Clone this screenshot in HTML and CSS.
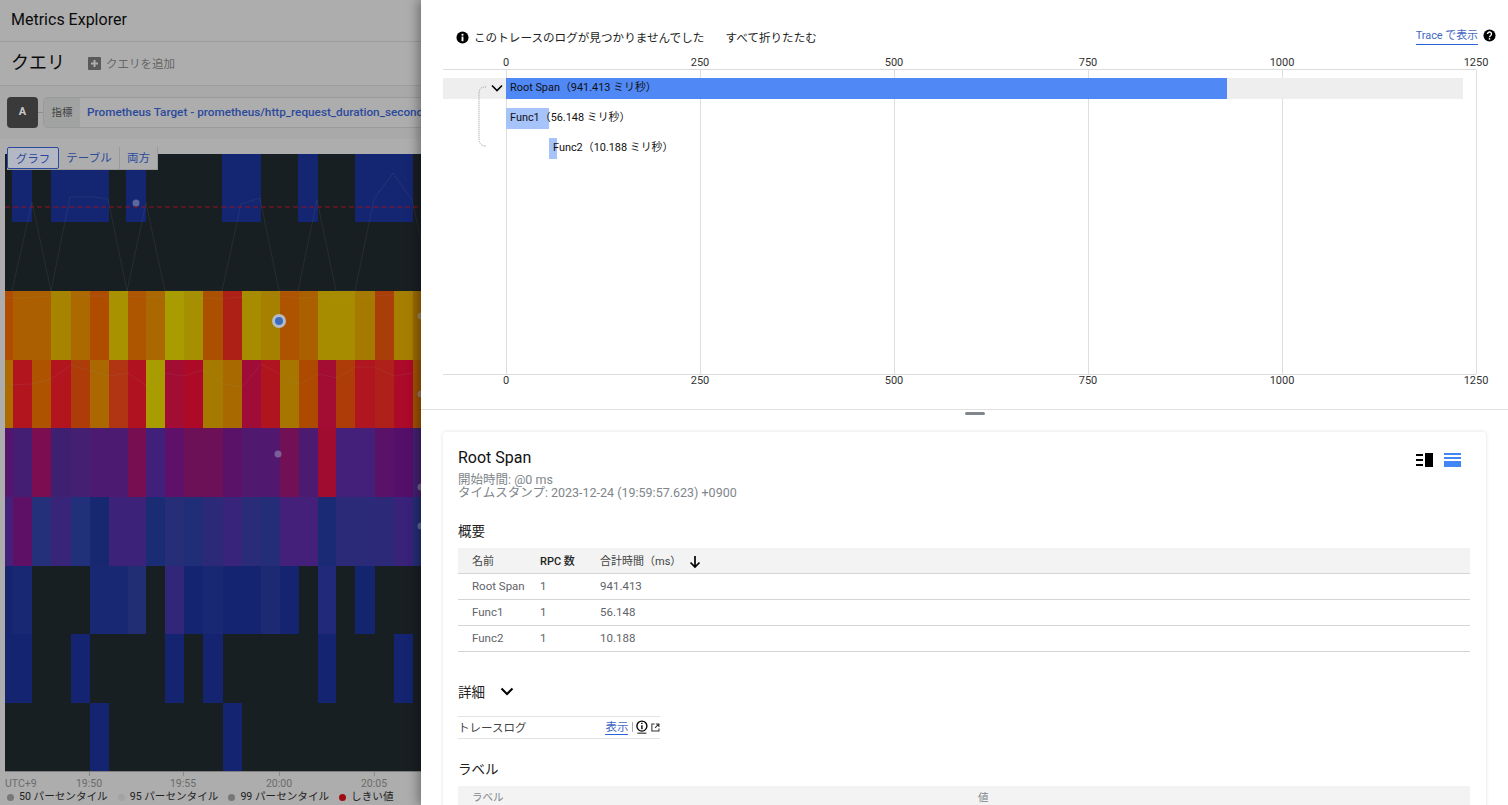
FILE: index.html
```html
<!DOCTYPE html>
<html lang="ja">
<head>
<meta charset="utf-8">
<title>Metrics Explorer</title>
<link rel="stylesheet" href="styles.css">
</head>
<body>
<div class="app">
  <section class="left">
    <header class="page-head">Metrics Explorer</header>
    <div class="query-head">
      <h2 class="query-title">クエリ</h2>
      <svg class="add-icon" viewBox="0 0 13 13"><rect width="13" height="13" rx="1" fill="#5a5a5a"/><path d="M6.5 3v7M3 6.5h7" stroke="#adadad" stroke-width="2"/></svg>
      <span class="add-text">クエリを追加</span>
    </div>
    <div class="query-row">
      <div class="chip">A</div>
      <div class="chip-link"></div>
      <div class="field">
        <span class="field-label">指標</span>
        <span class="field-value">Prometheus Target - prometheus/http_request_duration_seconds/histogram</span>
      </div>
    </div>
    <div class="chart-area">
      <div class="tabs">
        <span class="tab tab-on">グラフ</span>
        <span class="tab">テーブル</span>
        <span class="tab">両方</span>
      </div>
      <svg class="heatmap" width="416" height="617" viewBox="5 154 416 617">
        <rect x="5" y="154" width="416" height="617" fill="#181f23"/>
        <g fill="#142672">
          <rect x="12" y="154" width="20" height="68"/><rect x="51" y="154" width="58" height="68"/><rect x="126" y="154" width="20" height="68"/><rect x="222" y="154" width="39" height="68"/><rect x="298" y="154" width="20" height="68"/><rect x="355" y="154" width="58" height="68"/>
        </g>
        <g>
          <rect x="5" y="291" width="8" height="69" fill="#b04d02"/><rect x="13" y="291" width="19" height="69" fill="#ac5f00"/><rect x="32" y="291" width="19" height="69" fill="#ac5f00"/><rect x="51" y="291" width="20" height="69" fill="#a68400"/><rect x="71" y="291" width="19" height="69" fill="#ab6900"/><rect x="90" y="291" width="19" height="69" fill="#af4c00"/><rect x="109" y="291" width="19" height="69" fill="#a89200"/><rect x="128" y="291" width="18" height="69" fill="#ae5500"/><rect x="146" y="291" width="19" height="69" fill="#ab6800"/><rect x="165" y="291" width="19" height="69" fill="#a89c00"/><rect x="184" y="291" width="19" height="69" fill="#a68f00"/><rect x="203" y="291" width="20" height="69" fill="#ab5000"/><rect x="223" y="291" width="19" height="69" fill="#ad2015"/><rect x="242" y="291" width="19" height="69" fill="#a88c00"/><rect x="261" y="291" width="19" height="69" fill="#a68000"/><rect x="280" y="291" width="19" height="69" fill="#ae5400"/><rect x="299" y="291" width="19" height="69" fill="#ab6000"/><rect x="318" y="291" width="18" height="69" fill="#a88c00"/><rect x="336" y="291" width="19" height="69" fill="#a88c00"/><rect x="355" y="291" width="20" height="69" fill="#a67a00"/><rect x="375" y="291" width="19" height="69" fill="#aa3e08"/><rect x="394" y="291" width="19" height="69" fill="#a67f00"/><rect x="413" y="291" width="8" height="69" fill="#9c6a00"/>
        </g>
        <g>
          <rect x="5" y="360" width="8" height="68" fill="#ac6c00"/><rect x="13" y="360" width="19" height="68" fill="#b3151f"/><rect x="32" y="360" width="19" height="68" fill="#ae5400"/><rect x="51" y="360" width="20" height="68" fill="#b3151f"/><rect x="71" y="360" width="19" height="68" fill="#ad3c08"/><rect x="90" y="360" width="19" height="68" fill="#ab6800"/><rect x="109" y="360" width="19" height="68" fill="#b13512"/><rect x="128" y="360" width="18" height="68" fill="#b0131f"/><rect x="146" y="360" width="19" height="68" fill="#a89c00"/><rect x="165" y="360" width="19" height="68" fill="#a30c33"/><rect x="184" y="360" width="19" height="68" fill="#ad0a27"/><rect x="203" y="360" width="20" height="68" fill="#a67a00"/><rect x="223" y="360" width="19" height="68" fill="#a86a00"/><rect x="242" y="360" width="19" height="68" fill="#a00c38"/><rect x="261" y="360" width="19" height="68" fill="#b0141f"/><rect x="280" y="360" width="19" height="68" fill="#a67600"/><rect x="299" y="360" width="19" height="68" fill="#ad4a00"/><rect x="318" y="360" width="18" height="68" fill="#a30c33"/><rect x="336" y="360" width="19" height="68" fill="#ad3c08"/><rect x="355" y="360" width="20" height="68" fill="#b0161f"/><rect x="375" y="360" width="19" height="68" fill="#b0201a"/><rect x="394" y="360" width="19" height="68" fill="#ab0a28"/><rect x="413" y="360" width="8" height="68" fill="#a05000"/>
        </g>
        <g>
          <rect x="5" y="428" width="8" height="69" fill="#55146e"/><rect x="13" y="428" width="19" height="69" fill="#441e72"/><rect x="32" y="428" width="19" height="69" fill="#7b0d50"/><rect x="51" y="428" width="20" height="69" fill="#3f2070"/><rect x="71" y="428" width="19" height="69" fill="#442072"/><rect x="90" y="428" width="19" height="69" fill="#4c1a70"/><rect x="109" y="428" width="19" height="69" fill="#4c1a70"/><rect x="128" y="428" width="18" height="69" fill="#780e52"/><rect x="146" y="428" width="19" height="69" fill="#40207a"/><rect x="165" y="428" width="19" height="69" fill="#5f1068"/><rect x="184" y="428" width="19" height="69" fill="#6c1058"/><rect x="203" y="428" width="20" height="69" fill="#6c1058"/><rect x="223" y="428" width="19" height="69" fill="#5a1268"/><rect x="242" y="428" width="19" height="69" fill="#50186e"/><rect x="261" y="428" width="19" height="69" fill="#50186e"/><rect x="280" y="428" width="19" height="69" fill="#721056"/><rect x="299" y="428" width="19" height="69" fill="#4c1a70"/><rect x="318" y="428" width="18" height="69" fill="#a00c30"/><rect x="336" y="428" width="19" height="69" fill="#44207a"/><rect x="355" y="428" width="20" height="69" fill="#44207a"/><rect x="375" y="428" width="19" height="69" fill="#5a1268"/><rect x="394" y="428" width="19" height="69" fill="#540f6a"/><rect x="413" y="428" width="8" height="69" fill="#452070"/>
        </g>
        <g>
          <rect x="5" y="497" width="8" height="69" fill="#44207a"/><rect x="13" y="497" width="19" height="69" fill="#5e0f66"/><rect x="32" y="497" width="19" height="69" fill="#25307a"/><rect x="51" y="497" width="20" height="69" fill="#38257a"/><rect x="71" y="497" width="19" height="69" fill="#20307a"/><rect x="90" y="497" width="19" height="69" fill="#182870"/><rect x="109" y="497" width="19" height="69" fill="#3c2278"/><rect x="128" y="497" width="18" height="69" fill="#3c2278"/><rect x="146" y="497" width="19" height="69" fill="#1a2c74"/><rect x="165" y="497" width="19" height="69" fill="#262e78"/><rect x="184" y="497" width="19" height="69" fill="#202e78"/><rect x="203" y="497" width="20" height="69" fill="#2c2a78"/><rect x="223" y="497" width="19" height="69" fill="#38247a"/><rect x="242" y="497" width="19" height="69" fill="#2a2c78"/><rect x="261" y="497" width="19" height="69" fill="#242e78"/><rect x="280" y="497" width="19" height="69" fill="#44207a"/><rect x="299" y="497" width="19" height="69" fill="#44207a"/><rect x="318" y="497" width="18" height="69" fill="#1a2a74"/><rect x="336" y="497" width="19" height="69" fill="#2a2a78"/><rect x="355" y="497" width="20" height="69" fill="#2a2a78"/><rect x="375" y="497" width="19" height="69" fill="#2c2a78"/><rect x="394" y="497" width="19" height="69" fill="#38227a"/><rect x="413" y="497" width="8" height="69" fill="#242e78"/>
        </g>
        <g>
          <rect x="5" y="566" width="8" height="68" fill="#182470"/><rect x="13" y="566" width="19" height="68" fill="#182872"/><rect x="90" y="566" width="19" height="68" fill="#182872"/><rect x="109" y="566" width="19" height="68" fill="#182872"/><rect x="128" y="566" width="18" height="68" fill="#222e74"/><rect x="165" y="566" width="19" height="68" fill="#32267a"/><rect x="184" y="566" width="19" height="68" fill="#142470"/><rect x="203" y="566" width="20" height="68" fill="#182872"/><rect x="223" y="566" width="38" height="68" fill="#142470"/><rect x="261" y="566" width="19" height="68" fill="#1c2a74"/><rect x="280" y="566" width="19" height="68" fill="#142470"/><rect x="318" y="566" width="18" height="68" fill="#20297a"/><rect x="355" y="566" width="20" height="68" fill="#142570"/>
        </g>
        <g fill="#142470">
          <rect x="5" y="634" width="27" height="69"/><rect x="71" y="634" width="19" height="69"/><rect x="165" y="634" width="19" height="69"/><rect x="203" y="634" width="20" height="69"/><rect x="318" y="634" width="18" height="69"/><rect x="394" y="634" width="19" height="69"/>
          <rect x="90" y="703" width="19" height="68"/><rect x="223" y="703" width="19" height="68"/>
        </g>
        <g class="series">
          <polyline points="12,291 32,202 51,291 70,197 95,197 108,199 127,291 146,203 165,291 222,291 241,204 260,198 279,291 298,291 317,200 336,291 355,291 374,199 393,173 412,200 421,240"/>
          <polyline points="5,297 20,298 51,296 109,296 146,297 184,297 223,299 261,294 299,298 336,296 375,296 421,293"/>
          <polyline points="5,385 32,384 51,379 71,365 109,376 128,373 147,386 165,373 184,376 203,370 223,384 242,387 261,364 299,384 318,374 337,378 355,367 375,367 394,376 413,373 421,372"/>
        </g>
        <line class="threshold" x1="5" y1="207" x2="421" y2="207"/>
        <g>
          <circle class="dot" cx="136" cy="203" r="3.5"/>
          <circle class="dot" cx="278" cy="454" r="3.5"/>
          <circle class="dot" cx="421" cy="316" r="3.5"/>
          <circle class="dot" cx="421" cy="394" r="3.5"/>
          <circle class="dot" cx="421" cy="487" r="3.5"/>
          <circle class="dot" cx="421" cy="526" r="3.5"/>
          <circle class="dot-ring" cx="279" cy="321" r="7"/>
          <circle class="dot-core" cx="279" cy="321" r="4"/>
        </g>
      </svg>
      <div class="time-axis">
        <span class="tz">UTC+9</span>
        <span class="tick tick-1">19:50</span>
        <span class="tick tick-2">19:55</span>
        <span class="tick tick-3">20:00</span>
        <span class="tick tick-4">20:05</span>
      </div>
      <div class="legend">
        <span class="legend-item"><i class="swatch swatch-50"></i>50 パーセンタイル</span>
        <span class="legend-item"><i class="swatch swatch-95"></i>95 パーセンタイル</span>
        <span class="legend-item"><i class="swatch swatch-50"></i>99 パーセンタイル</span>
        <span class="legend-item"><i class="swatch swatch-red"></i>しきい値</span>
      </div>
    </div>
  </section>

  <section class="drawer">
    <div class="trace-top">
      <div class="notice-row">
        <svg class="info-solid" viewBox="0 0 14 14"><circle cx="7" cy="7" r="6.5" fill="#000"/><rect x="6" y="6" width="2" height="5" fill="#fff"/><rect x="6" y="3" width="2" height="2" fill="#fff"/></svg>
        <span class="notice">このトレースのログが見つかりませんでした</span>
        <span class="collapse-all">すべて折りたたむ</span>
        <span class="spacer"></span>
        <a class="trace-link">Trace で表示</a>
        <svg class="help" viewBox="0 0 14 14"><circle cx="7" cy="7" r="6.5" fill="#000"/><path d="M4.9 5.4a2.1 2.1 0 1 1 3.4 1.6c-.8.6-1.3 1-1.3 2" fill="none" stroke="#fff" stroke-width="1.5"/><rect x="6.2" y="9.8" width="1.6" height="1.6" fill="#fff"/></svg>
      </div>
      <div class="timeline">
        <div class="scale scale-top"><span>0</span><span>250</span><span>500</span><span>750</span><span>1000</span><span>1250</span></div>
        <div class="plot">
          <div class="grid-lines"><i></i><i></i><i></i><i></i><i></i><i></i></div>
          <div class="span-row span-root">
            <svg class="span-chevron" viewBox="0 0 12 8"><path d="M1 1.5l5 5 5-5" fill="none" stroke="#000" stroke-width="1.6"/></svg>
            <div class="root-bar"><span class="span-label">Root Span（941.413 ミリ秒）</span></div>
          </div>
          <div class="span-row">
            <div class="bar bar-func1"></div>
            <span class="span-label span-label-1">Func1（56.148 ミリ秒）</span>
          </div>
          <div class="span-row">
            <div class="bar bar-func2"></div>
            <span class="span-label span-label-2">Func2（10.188 ミリ秒）</span>
          </div>
          <svg class="tree-line" width="30" height="64" viewBox="0 0 30 64"><path d="M9 1H8Q2 1 2 8V53Q2 60 9 60" fill="none" stroke="#9a9a9a" stroke-dasharray="1 1"/></svg>
        </div>
        <div class="scale scale-bottom"><span>0</span><span>250</span><span>500</span><span>750</span><span>1000</span><span>1250</span></div>
      </div>
    </div>
    <div class="handle-bar"><i class="handle"></i></div>
    <article class="card">
      <div class="card-head">
        <div>
          <h3 class="span-title">Root Span</h3>
          <p class="span-meta">開始時間: @0 ms<br>タイムスタンプ: 2023-12-24 (19:59:57.623) +0900</p>
        </div>
        <div class="view-icons">
          <svg class="view-icon" viewBox="0 0 17 14"><path d="M0 1h7v2H0zM0 6h7v2H0zM0 11h7v2H0z" fill="#000"/><rect x="9" y="0" width="8" height="14" fill="#000"/></svg>
          <svg class="view-icon" viewBox="0 0 17 14"><path d="M0 0h17v2H0zM0 4h17v2H0z" fill="#4285f4"/><rect y="8" width="17" height="6" fill="#4285f4"/></svg>
        </div>
      </div>
      <h4 class="section-title section-summary">概要</h4>
      <table class="stats">
        <thead>
          <tr><th class="col-name">名前</th><th class="col-rpc">RPC 数</th><th class="col-total">合計時間（ms）<svg class="sort" viewBox="0 0 12 14"><path d="M6 1v11M1.5 7.5L6 12l4.500-4.500" fill="none" stroke="#000" stroke-width="1.700"/></svg></th></tr>
        </thead>
        <tbody>
          <tr><td>Root Span</td><td>1</td><td>941.413</td></tr>
          <tr><td>Func1</td><td>1</td><td>56.148</td></tr>
          <tr><td>Func2</td><td>1</td><td>10.188</td></tr>
        </tbody>
      </table>
      <div class="details-head">
        <h4 class="section-title">詳細</h4>
        <svg class="details-chevron" viewBox="0 0 14 9"><path d="M1.500 1.500L7 7l5.500-5.500" fill="none" stroke="#000" stroke-width="2"/></svg>
      </div>
      <div class="log-row">
        <span class="log-name">トレースログ</span>
        <a class="log-link">表示</a>
        <span class="log-sep"></span>
        <svg class="log-info" viewBox="0 0 13 15"><circle cx="6.500" cy="6.500" r="5.500" fill="none" stroke="#000" stroke-width="1.500"/><path d="M6.500 5.500v4.500M6.500 2.800v1.500" stroke="#000" stroke-width="1.500"/><path d="M1.500 14.300h10" stroke="#000"/></svg>
        <svg class="log-open" viewBox="0 0 10 10"><path d="M4 1H1v8h8V6M5.500 1H9v3.500M9 1L4.500 5.500" fill="none" stroke="#333" stroke-width="1.200"/></svg>
      </div>
      <h4 class="section-title section-labels">ラベル</h4>
      <div class="labels-head"><span class="labels-key">ラベル</span><span>値</span></div>
    </article>
  </section>
</div>
</body>
</html>
```
FILE: styles.css
```css
* { box-sizing: border-box; }
html, body { margin: 0; height: 100%; overflow: hidden; }
body { font-family: Roboto, "Noto Sans CJK JP", sans-serif; background: #fff; color: #000; }
h2, h3, h4, p { margin: 0; font-weight: 400; }
.app { display: flex; width: 1508px; height: 805px; overflow: hidden; }

/* left dimmed page */
.left { width: 421px; flex: none; height: 805px; background: #adadad; overflow: hidden; display: flex; flex-direction: column; }
.page-head { height: 42px; padding: 11px 11px 0; font-size: 16px; line-height: 18px; color: #0b0b0b; border-bottom: 1px solid #9c9c9c; flex: none; }
.query-head { height: 44px; padding: 0 11px; display: flex; align-items: center; border-bottom: 1px solid #9c9c9c; flex: none; }
.query-title { font-size: 18px; color: #0b0b0b; width: 77px; margin-top: -6px; }
.add-icon { width: 13px; height: 13px; margin-right: 5px; flex: none; }
.add-text { font-size: 11.500px; color: #676767; margin-bottom: 2px; }
.query-row { height: 53px; padding: 11px 0 0 7px; display: flex; align-items: flex-start; background: #a9a9a9; flex: none; }
.chip { width: 31px; height: 31px; border-radius: 4px; background: #3a3a3a; color: #c8c8c8; font-size: 11px; font-weight: 700; display: flex; align-items: center; justify-content: center; padding-bottom: 3px; flex: none; }
.chip-link { width: 5px; height: 1px; background: #8c8c8c; margin-top: 15px; flex: none; }
.field { height: 31px; flex: none; width: 420px; display: flex; border: 1px solid #9a9a9a; border-radius: 4px 0 0 4px; background: #adadad; white-space: nowrap; }
.field-label { width: 36px; background: #a1a3a3; color: #444; font-size: 10.500px; display: flex; align-items: center; justify-content: center; padding-bottom: 3px; flex: none; }
.field-value { margin-left: 7px; font-size: 11.750px; font-weight: 500; color: #2b4a9d; line-height: 28px; }
.chart-area { position: relative; padding: 15px 0 0 5px; flex: 1; }
.tabs { position: absolute; left: 7px; top: 8px; display: flex; height: 23px; background: #adadad; border: 1px solid #9a9a9a; border-left: 0; border-top: 0; font-size: 11.500px; color: #2b4a9d; z-index: 1; }
.tab { padding: 2px 0 0; text-align: center; border-right: 1px solid #9a9a9a; width: 61px; }
.tab:last-child { width: 37px; border-right: 0; }
.tab-on { width: 52px; background: #b4b8c4; border: 1px solid #2b4a9d; border-radius: 2px; }
.heatmap { display: block; }
.series polyline { fill: none; stroke: rgba(150, 150, 150, .12); stroke-width: 1; }
.threshold { stroke: #96101e; stroke-width: 1; stroke-dasharray: 5 3; }
.dot { fill: rgba(160, 170, 200, .5); }
.dot-ring { fill: #b5bcc8; }
.dot-core { fill: #3e6dbd; }
.time-axis { position: relative; height: 18px; border-top: 1px solid #7f7f7f; font-size: 10.500px; color: #6b6b6b; line-height: 12px; width: 416px; }
.tz { position: absolute; left: 0; top: 6px; }
.tick { position: absolute; top: 6px; transform: translateX(-50%); }
.tick::before { content: ""; position: absolute; left: 50%; top: -6px; height: 4px; width: 1px; background: #8a8a8a; }
.tick-1 { left: 84px; }
.tick-2 { left: 178px; }
.tick-3 { left: 274px; }
.tick-4 { left: 369px; }
.legend { display: flex; font-size: 10.600px; line-height: 14px; color: #222; white-space: nowrap; margin-top: 1px; padding-left: 2px; }
.legend-item { display: flex; align-items: center; margin-right: 10px; }
.swatch { width: 7px; height: 7px; border-radius: 50%; margin-right: 5px; flex: none; }
.swatch-50 { background: #777; }
.swatch-95 { background: #a3a3a3; }
.swatch-red { background: #a00c14; }

/* drawer */
.drawer { position: relative; z-index: 2; flex: 1; height: 805px; background: #fff; box-shadow: -3px 0 10px rgba(0, 0, 0, .35); overflow: hidden; }
.trace-top { height: 410px; border-bottom: 1px solid #e2e2e2; padding: 0 0 0 22px; }
.notice-row { height: 54px; display: flex; align-items: center; padding: 20px 12px 0 13px; white-space: nowrap; }
.info-solid { width: 13px; height: 13px; margin-right: 5px; flex: none; }
.notice { font-size: 11.600px; color: #222; }
.collapse-all { font-size: 11.600px; color: #222; margin-left: 21px; }
.spacer { flex: 1; }
.trace-link { font-size: 10.900px; color: #3f68c4; border-bottom: 1px solid #2b63dc; line-height: 12px; padding-bottom: 2px; margin-top: 0; }
.help { width: 13px; height: 13px; margin-left: 5px; margin-top: -3px; flex: none; }
.timeline { width: 1043px; }
.scale { display: flex; height: 15px; padding-left: 63px; font-size: 11px; color: #333; line-height: 17px; }
.scale span { width: 194px; flex: none; transform: translateX(-50%); text-align: center; }
.scale-bottom { height: 20px; line-height: 12px; }
.plot { position: relative; height: 306px; border-top: 1px solid #dcdcdc; border-bottom: 1px solid #dcdcdc; width: 1033px; padding-top: 8px; }
.grid-lines { position: absolute; left: 63px; top: 0; bottom: 0; width: 971px; display: flex; justify-content: space-between; }
.grid-lines i { width: 1px; background: #dedede; }
.tree-line { position: absolute; left: 34px; top: 16px; }
.span-row { position: relative; height: 21px; margin-bottom: 9px; padding-left: 63px; display: flex; align-items: center; white-space: nowrap; }
.span-root { background: #eee; width: 1020px; }
.span-chevron { position: absolute; left: 48px; top: 6px; width: 12px; height: 8px; }
.root-bar { width: 721px; height: 21px; background: #5088f5; flex: none; display: flex; align-items: center; }
.bar { height: 21px; background: #a6c4fa; flex: none; }
.bar-func1 { width: 43px; }
.bar-func2 { width: 8px; margin-left: 43px; }
.span-label { font-size: 10.900px; color: #111; margin-left: 4px; margin-bottom: 6px; }
.span-label-1 { margin-left: -39px; }
.span-label-2 { margin-left: -4px; }
.handle-bar { height: 22px; display: flex; justify-content: center; padding: 2px 0 0 0; }
.handle { width: 20px; height: 3px; border-radius: 2px; background: #80868b; margin-left: 20px; }
.card { margin-left: 22px; width: 1043px; height: 400px; padding: 15px 16px 0 15px; box-shadow: 0 0 4px rgba(0, 0, 0, .12); border-radius: 3px 3px 0 0; }
.card-head { display: flex; justify-content: space-between; }
.span-title { font-size: 16px; line-height: 22px; color: #111; }
.span-meta { font-size: 12.500px; line-height: 13px; color: #80868b; margin-top: 4px; }
.view-icons { display: flex; gap: 11px; padding: 6px 9px 0 0; }
.view-icon { width: 17px; height: 14px; }
.section-title { font-size: 13.500px; line-height: 18px; color: #222; }
.section-summary { margin-top: 23px; }
.stats { width: 1012px; border-collapse: collapse; margin-top: 8px; font-size: 11.500px; color: #5f6368; table-layout: fixed; }
.stats th { font-weight: 400; text-align: left; height: 25px; padding: 0; background: #f3f3f3; border-bottom: 1px solid #d5d5d5; color: #444; font-size: 11px; }
.stats td { height: 26px; padding: 0; border-bottom: 1px solid #d5d5d5; }
.stats th:first-child, .stats td:first-child { padding-left: 14px; }
.col-name { width: 82px; }
.col-rpc { width: 60px; color: #222 !important; font-weight: 500 !important; }
.sort { width: 12px; height: 14px; margin-left: 8px; vertical-align: -4px; }
.details-head { display: flex; align-items: center; margin-top: 31px; }
.details-chevron { width: 14px; height: 9px; margin-left: 15px; }
.log-row { display: flex; align-items: center; width: 202px; height: 23px; margin-top: 15px; border-top: 1px solid #e2e2e2; border-bottom: 1px solid #e2e2e2; font-size: 11.500px; color: #444; white-space: nowrap; }
.log-name { width: 150px; }
.log-link { color: #3f68c4; border-bottom: 1px solid #2b63dc; line-height: 14px; }
.log-sep { width: 1px; height: 10px; background: #aaa; margin: 0 3px 0 4px; }
.log-info { width: 12px; height: 14px; margin-right: 3px; }
.log-open { width: 9px; height: 9px; }
.section-labels { margin-top: 21px; }
.labels-head { display: flex; align-items: center; height: 24px; margin-top: 8px; background: #f3f3f3; font-size: 10.500px; color: #80868b; width: 1012px; padding: 0 0 2px 14px; }
.labels-key { width: 506px; }
```
